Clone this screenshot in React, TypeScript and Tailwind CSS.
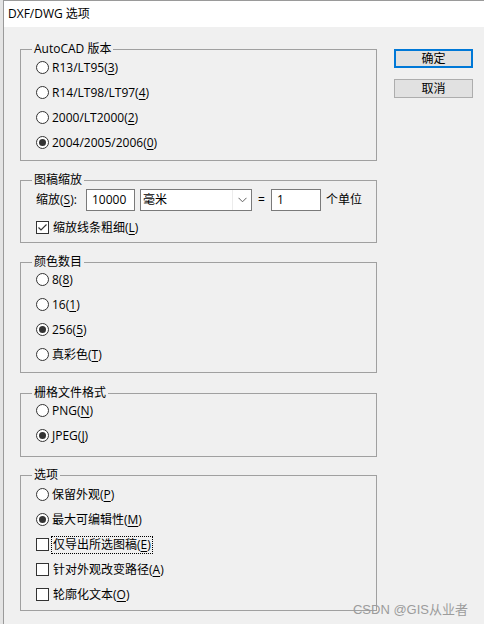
import React from "react";

const M = ({ c }: { c: string }) => (
  <span className="underline underline-offset-[2px] decoration-1">{c}</span>
);

function Radio({ checked, children }: { checked?: boolean; children: React.ReactNode }) {
  return (
    <div className="h-[25px] flex items-center pl-[15px]">
      <span className="w-[13px] h-[13px] rounded-full border border-[#333333] bg-white flex items-center justify-center shrink-0">
        {checked && <span className="w-[7px] h-[7px] rounded-full bg-[#333333]" />}
      </span>
      <span className="ml-[3px] leading-[16px] whitespace-nowrap">{children}</span>
    </div>
  );
}

function Check({ checked, focus, children }: { checked?: boolean; focus?: boolean; children: React.ReactNode }) {
  return (
    <div className="h-[25px] flex items-center pl-[15px]">
      <span className="w-[13px] h-[13px] border border-[#333333] bg-white flex items-center justify-center shrink-0">
        {checked && (
          <svg width="11" height="11" viewBox="0 0 11 11">
            <path d="M1.5 5.5 L4 8 L9.5 2.5" fill="none" stroke="#333333" strokeWidth="1.2" />
          </svg>
        )}
      </span>
      <span
        className={
          "ml-[2px] leading-[16px] whitespace-nowrap px-[1px] border border-dotted " +
          (focus ? "border-[#000000]" : "border-transparent")
        }
      >
        {children}
      </span>
    </div>
  );
}

function Group({ title, className, children }: { title: string; className: string; children: React.ReactNode }) {
  return (
    <div className={"relative border border-[#a0a0a0] " + className}>
      <span className="absolute left-[11px] top-[-9px] bg-[#f0f0f0] px-[2px] leading-[16px] whitespace-nowrap">
        {title}
      </span>
      {children}
    </div>
  );
}

export default function App() {
  return (
    <div className="w-[484px] h-[624px] bg-white flex overflow-hidden relative text-[12px] text-black font-['Open_Sans','Noto_Sans_CJK_SC',sans-serif]">
      <div className="w-[3px] bg-[#e4e4e4] shrink-0" />
      <div className="flex-1 flex flex-col border-l border-t border-[#9a9a9a]">
        <div className="h-[26px] bg-white flex items-center pl-[4px] leading-[16px]">DXF/DWG 选项</div>
        <div className="flex-1 bg-[#f0f0f0] flex items-start pt-[22px] pl-[16px]">
          <div className="w-[357px] flex flex-col">
            <Group title="AutoCAD 版本" className="pt-[5px] pb-[5px]">
              <Radio>R13/LT95(<M c="3" />)</Radio>
              <Radio>R14/LT98/LT97(<M c="4" />)</Radio>
              <Radio>2000/LT2000(<M c="2" />)</Radio>
              <Radio checked>2004/2005/2006(<M c="0" />)</Radio>
            </Group>

            <Group title="图稿缩放" className="mt-[19px] pt-[8px] pb-[2px]">
              <div className="h-[22px] flex items-center pl-[15px]">
                <span className="w-[50px] leading-[16px] whitespace-nowrap">
                  缩放(<M c="S" />):
                </span>
                <div className="w-[49px] h-[22px] border border-[#7a7a7a] bg-white flex items-center pl-[5px] leading-[16px]">
                  10000
                </div>
                <div className="ml-[5px] w-[112px] h-[22px] border border-[#7a7a7a] bg-white flex items-center">
                  <span className="flex-1 pl-[2px] leading-[16px]">毫米</span>
                  <span className="w-[19px] h-full border-l border-[#ececec] flex items-center justify-center">
                    <svg width="9" height="6" viewBox="0 0 9 6">
                      <path d="M0.5 0.8 L4.5 4.8 L8.5 0.8" fill="none" stroke="#606060" strokeWidth="1" />
                    </svg>
                  </span>
                </div>
                <span className="w-[19px] text-center leading-[16px]">=</span>
                <div className="w-[50px] h-[22px] border border-[#7a7a7a] bg-white flex items-center pl-[5px] leading-[16px]">
                  1
                </div>
                <span className="ml-[5px] leading-[16px] whitespace-nowrap">个单位</span>
              </div>
              <div className="mt-[4px]">
                <Check checked>
                  缩放线条粗细(<M c="L" />)
                </Check>
              </div>
            </Group>

            <Group title="颜色数目" className="mt-[19px] pt-[4px] pb-[5px]">
              <Radio>8(<M c="8" />)</Radio>
              <Radio>16(<M c="1" />)</Radio>
              <Radio checked>256(<M c="5" />)</Radio>
              <Radio>真彩色(<M c="T" />)</Radio>
            </Group>

            <Group title="栅格文件格式" className="mt-[20px] pt-[4px] pb-[8px]">
              <Radio>PNG(<M c="N" />)</Radio>
              <Radio checked>JPEG(<M c="J" />)</Radio>
            </Group>

            <Group title="选项" className="mt-[18px] pt-[6px] pb-[3px]">
              <Radio>保留外观(<M c="P" />)</Radio>
              <Radio checked>最大可编辑性(<M c="M" />)</Radio>
              <Check focus>仅导出所选图稿(<M c="E" />)</Check>
              <Check>针对外观改变路径(<M c="A" />)</Check>
              <Check>轮廓化文本(<M c="O" />)</Check>
            </Group>
          </div>

          <div className="ml-[17px] w-[79px] flex flex-col">
            <button className="h-[19px] border-2 border-[#0078d7] bg-[#e1e1e1] flex items-center justify-center leading-[14px]">
              确定
            </button>
            <button className="mt-[11px] h-[19px] border border-[#adadad] bg-[#e1e1e1] flex items-center justify-center leading-[14px]">
              取消
            </button>
          </div>
        </div>
      </div>
      <div className="absolute right-[16px] bottom-[6px] text-[13px] leading-[17px] text-[#9c9c9c] whitespace-nowrap font-['Liberation_Sans','Noto_Sans_CJK_SC',sans-serif]">
        CSDN @GIS从业者
      </div>
    </div>
  );
}
